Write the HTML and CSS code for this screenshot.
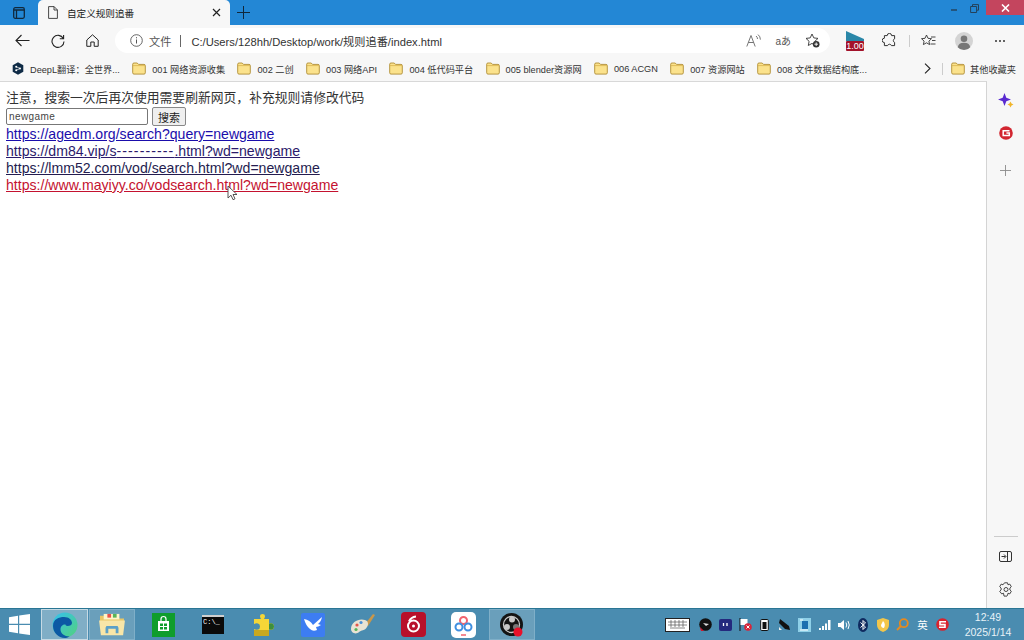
FILE: index.html
```html
<!DOCTYPE html>
<html lang="zh">
<head>
<meta charset="utf-8">
<title>自定义规则追番</title>
<link rel="stylesheet" href="styles.css">
</head>
<body>
<svg class="defs" width="0" height="0">
  <symbol id="folder" viewBox="0 0 14 13">
    <path d="M.7 2.2Q.7 1 2 1h3.2l1.3 1.4H12q1.3 0 1.3 1.2v7.2q0 1.3-1.3 1.300H2q-1.300 0-1.300-1.300z" fill="#fbe28c" stroke="#b08d33" stroke-width=".9"/>
    <path d="M1 3.6h12" stroke="#d9b24c" stroke-width=".8"/>
  </symbol>
</svg>
<div class="window">
  <header class="titlebar">
    <div class="tabicon">
      <svg width="12" height="12" viewBox="0 0 12 12"><rect x=".7" y=".7" width="10.6" height="10.6" rx="1.5" fill="none" stroke="#10283c" stroke-width="1.3"/><path d="M1 3h10M3.5 3v8" stroke="#10283c" stroke-width="1.3"/></svg>
    </div>
    <div class="tab">
      <svg class="pageicon" width="10" height="13" viewBox="0 0 10 13"><path d="M.6.6h5.5l3.3 3.3v8.5H.6zM6 .6v3.4h3.4" fill="none" stroke="#333" stroke-width=".9"/></svg>
      <span class="tabtitle">自定义规则追番</span>
      <svg class="tabclose" width="9" height="9" viewBox="0 0 9 9"><path d="M1 1l7 7M8 1L1 8" stroke="#222" stroke-width="1.2"/></svg>
    </div>
    <svg class="newtab" width="13" height="13" viewBox="0 0 13 13"><path d="M6.5 0v13M0 6.5h13" stroke="#10283c" stroke-width="1"/></svg>
    <div class="spacer"></div>
    <div class="winctl">
      <svg width="8" height="8" viewBox="0 0 8 8"><path d="M1 6h6" stroke="#24405a" stroke-width="1.4"/></svg>
    </div>
    <div class="winctl winctl-restore">
      <svg width="9" height="9" viewBox="0 0 9 9"><path d="M2.5 2V.6h6v5.6H7M.6 2.5h6v6h-6z" fill="none" stroke="#24405a" stroke-width="1"/></svg>
    </div>
    <div class="winclose">
      <svg width="9" height="8" viewBox="0 0 9 8"><path d="M1 .5l7 7M8 .5l-7 7" stroke="#fff" stroke-width="1.6"/></svg>
    </div>
  </header>

  <nav class="toolbar">
    <svg class="navback" width="15" height="13" viewBox="0 0 15 13"><path d="M14.5 6.5H1M6.5 1L1 6.5 6.5 12" fill="none" stroke="#222" stroke-width="1.1"/></svg>
    <svg class="navreload" width="14" height="14" viewBox="0 0 14 14"><path d="M12.3 4.5A6 6 0 1 0 13 7.5M12.6 1v3.8H8.8" fill="none" stroke="#222" stroke-width="1.1"/></svg>
    <svg class="navhome" width="13" height="13" viewBox="0 0 13 13"><path d="M.8 6L6.5.8 12.2 6v6.3H8.2V8H4.8v4.3H.8z" fill="none" stroke="#222" stroke-width="1"/></svg>
    <div class="address">
      <svg class="info" width="13" height="13" viewBox="0 0 13 13"><circle cx="6.5" cy="6.5" r="5.8" fill="none" stroke="#555" stroke-width=".9"/><path d="M6.5 5.5v4M6.5 3.2v1.1" stroke="#555" stroke-width="1"/></svg>
      <span class="fileword">文件</span>
      <span class="addrsep"></span>
      <span class="url">C:/Users/128hh/Desktop/work/规则追番/index.html</span>
      <span class="spacer"></span>
      <svg class="addricon1" width="15" height="13" viewBox="0 0 15 13"><path d="M.8 12.5L5 1.500l4.200 11M2.400 8.500h5.200M10 2q1.500 1 1.500 3M12 .6q2.400 1.800 2.400 5" fill="none" stroke="#666" stroke-width=".9"/></svg>
      <span class="translate">aあ</span>
      <svg class="addricon3" width="15" height="15" viewBox="0 0 15 15"><path d="M7 1l1.800 3.900 4.200.5-3.100 2.900.8 4.200L7 10.400l-3.700 2.100.8-4.200L1 5.400l4.200-.5z" fill="none" stroke="#333" stroke-width=".9"/><circle cx="11.200" cy="11.200" r="3.300" fill="#333"/><path d="M11.200 9.400v3.600M9.400 11.200H13" stroke="#fff" stroke-width=".9"/></svg>
    </div>
    <div class="speed">
      <svg class="speedflag" width="18" height="10" viewBox="0 0 18 10"><path d="M0 0l18 8v2H0z" fill="#2a87a8"/></svg>
      <span class="speedbadge">1.00</span>
    </div>
    <svg class="puzzle" width="15" height="15" viewBox="0 0 15 15"><path d="M5.200 2.600a2.200 2.200 0 0 1 4.400 0h3v3.200a1.900 1.900 0 0 0 0 3.600v3.200H9.400a2 2 0 0 0-3.800 0H2.400V9.600a2.200 2.200 0 0 1 0-4.400V2.600z" fill="none" stroke="#333" stroke-width="1"/></svg>
    <span class="toolsep"></span>
    <svg class="favs" width="15" height="14" viewBox="0 0 15 14"><path d="M5.500 1l1.500 3.300 3.500.4-2.600 2.400.7 3.500-3.100-1.800-3.100 1.800.7-3.500L.5 4.700 4 4.300zM10 3h4.500M11 6.500h3.500M9.500 10h5" fill="none" stroke="#333" stroke-width=".9"/></svg>
    <div class="avatar">
      <svg width="18" height="18" viewBox="0 0 18 18"><circle cx="9" cy="9" r="9" fill="#d4d4d4"/><circle cx="9" cy="6.700" r="3.300" fill="#777"/><path d="M2.800 15.200Q3.500 10.800 9 10.800t6.200 4.400Q13 18 9 18t-6.200-2.800z" fill="#777"/></svg>
    </div>
    <div class="more"><i></i><i></i><i></i></div>
  </nav>

  <div class="bookmarks">
    <div class="bm bm-deepl">
      <svg width="12" height="13" viewBox="0 0 12 13"><path d="M6 .3l5.300 3v6.400L6 12.700.7 9.700V3.300z" fill="#0f2b46"/><circle cx="4.200" cy="4.700" r="1" fill="#fff"/><circle cx="4.200" cy="8.300" r="1" fill="#fff"/><circle cx="8" cy="6.500" r="1" fill="#fff"/><path d="M4.200 4.700L8 6.500 4.200 8.300" fill="none" stroke="#fff" stroke-width=".7"/></svg>
      <span>DeepL翻译：全世界...</span>
    </div>
    <div class="bm"><svg class="fd"><use href="#folder"/></svg><span>001 网络资源收集</span></div>
    <div class="bm"><svg class="fd"><use href="#folder"/></svg><span>002 二创</span></div>
    <div class="bm"><svg class="fd"><use href="#folder"/></svg><span>003 网络API</span></div>
    <div class="bm"><svg class="fd"><use href="#folder"/></svg><span>004 低代码平台</span></div>
    <div class="bm"><svg class="fd"><use href="#folder"/></svg><span>005 blender资源网</span></div>
    <div class="bm"><svg class="fd"><use href="#folder"/></svg><span>006 ACGN</span></div>
    <div class="bm"><svg class="fd"><use href="#folder"/></svg><span>007 资源网站</span></div>
    <div class="bm"><svg class="fd"><use href="#folder"/></svg><span>008 文件数据结构底...</span></div>
    <div class="spacer"></div>
    <svg class="bmchev" width="7" height="11" viewBox="0 0 7 11"><path d="M1 .7l5 4.800-5 4.800" fill="none" stroke="#222" stroke-width="1.100"/></svg>
    <span class="bmsep"></span>
    <div class="bm bm-other"><svg class="fd"><use href="#folder"/></svg><span>其他收藏夹</span></div>
  </div>

  <div class="main">
    <main class="content">
      <div class="notice">注意，搜索一次后再次使用需要刷新网页，补充规则请修改代码</div>
      <form class="searchform">
        <input class="searchinput" type="text" value="newgame">
        <button class="searchbtn" type="button">搜索</button>
      </form>
      <div><a class="link-a" href="#a">https://agedm.org/search?query=newgame</a></div>
      <div><a class="link-b" href="#b">https://dm84.vip/s<span class="dashes">----------</span>.html?wd=newgame</a></div>
      <div><a class="link-c" href="#c">https://lmm52.com/vod/search.html?wd=newgame</a></div>
      <div><a class="link-d" href="#d">https://www.mayiyy.co/vodsearch.html?wd=newgame</a></div>
      <svg class="cursor" width="11" height="16" viewBox="0 0 11 16"><path d="M1 1v12l3-2.800 2 4.500 2-.9-2-4.300h4z" fill="#fff" stroke="#444" stroke-width=".9"/></svg>
    </main>
    <aside class="sidebar">
      <svg class="side-spark" width="16" height="15" viewBox="0 0 16 15"><path d="M6.500 0l1.800 4.700L13 6.500 8.300 8.300 6.500 13 4.700 8.300 0 6.500l4.700-1.800z" fill="#5a2bd0"/><path d="M12.500 8.500l1 2 2 1-2 1-1 2-1-2-2-1 2-1z" fill="#f0b429"/></svg>
      <svg class="side-g" width="14" height="14" viewBox="0 0 14 14"><circle cx="7" cy="7" r="6.800" fill="#d22630"/><path d="M10.500 4.800H4.200v4.600h6.100V7H7.400" fill="none" stroke="#fff" stroke-width="1.500"/></svg>
      <svg class="side-plus" width="11" height="11" viewBox="0 0 11 11"><path d="M5.500 0v11M0 5.500h11" stroke="#8a8a8a" stroke-width=".9"/></svg>
      <div class="spacer"></div>
      <span class="sidesep"></span>
      <svg class="side-panel" width="13" height="11" viewBox="0 0 13 11"><rect x=".5" y=".5" width="12" height="10" rx="1.500" fill="none" stroke="#333"/><path d="M8.500 .5v10M2.500 5.500h4M5 3.500l2 2-2 2" fill="none" stroke="#333"/></svg>
      <svg class="side-gear" width="14" height="15" viewBox="0 0 14 15"><path d="M5.500 .8h3l.5 2 1.800-.7 1.500 2.600-1.400 1.300v2l1.400 1.300-1.500 2.600-1.800-.7-.5 2.100-.5.800h-3l-.5-2.900-1.800.7L.7 9.300l1.400-1.300V6L.7 4.700l1.500-2.600 1.800.7z" fill="none" stroke="#333" stroke-width=".9"/><circle cx="7" cy="7.500" r="2" fill="none" stroke="#333" stroke-width=".9"/></svg>
    </aside>
  </div>

  <footer class="taskbar">
    <div class="startbtn">
      <svg width="21" height="21" viewBox="0 0 21 21"><path d="M0 3.200L9 1.800v8H0zM10.200 1.600L21 0v9.800H10.200zM0 11h9v8.200L0 17.800zM10.200 11H21v10l-10.800-1.600z" fill="#fff"/></svg>
    </div>
    <div class="tb tb-active">
      <svg width="26" height="26" viewBox="0 0 26 26"><defs><linearGradient id="edgeA" x1="0" y1="0" x2="1" y2="1"><stop offset="0" stop-color="#35c1f1"/><stop offset="1" stop-color="#52d17c"/></linearGradient></defs><circle cx="13" cy="13" r="12.500" fill="url(#edgeA)"/><path d="M1 14C1 7 7 5 12 5c5 0 8 3 8 6 0 2-2 3-4.500 3-2 0-2-1.500-2-1.500-3-.5-5 2-5 5 0 4 4 7 9 7-2 1-3.500 1.500-4.500 1.500C6 26 1 20 1 14z" fill="#0c59a4"/></svg>
    </div>
    <div class="tb tb-open">
      <svg width="26" height="24" viewBox="0 0 28 26"><path d="M1 3h9l2 3h15v6H1z" fill="#e9c766"/><rect x="5" y="1" width="17" height="6" fill="#fff5c8"/><rect x="9" y="1" width="4" height="4" fill="#e8524a"/><rect x="15" y="1" width="4" height="4" fill="#58b45a"/><path d="M0 8h28l-2 16H2z" fill="#f8e6a8"/><path d="M8 14h12l1 2v6h-3v-5h-8v5H7v-6z" fill="#5ba0c8"/></svg>
    </div>
    <div class="tb">
      <svg width="23" height="24" viewBox="0 0 23 24"><rect width="23" height="24" fill="#0f9d2c"/><path d="M9 8V6a2.500 2.500 0 0 1 5 0v2" fill="none" stroke="#fff" stroke-width="1.200"/><path d="M6 8h11v10H6z" fill="#fff"/><path d="M8 10.500h3v2.500H8zM12 10.500h3v2.500h-3zM8 14h3v2.500H8zM12 14h3v2.500h-3z" fill="#0f9d2c"/></svg>
    </div>
    <div class="tb">
      <div class="cmd"><span class="cmdtext">C:\_</span></div>
    </div>
    <div class="tb">
      <svg width="21" height="22" viewBox="0 0 21 22"><path d="M7 2q0-2 2.500-2T12 2q0 1.500-1 3h5v5q1.500-1 3-.5 2 .5 2 3t-2 3q-1.500.5-3-.5v6H1v-6q2 1 4 .5t2-3-2-3q-2-.5-4 .5V5h7q-1-1.500-1-3z" fill="#f5d637"/><path d="M16 10q1.500-1 3-.5 2 .5 2 3t-2 3q-1.500.5-3-.5z" fill="#3d8f3d"/><path d="M1 16h15v6H1z" fill="#c9a820"/></svg>
    </div>
    <div class="tb">
      <svg width="24" height="24" viewBox="0 0 24 24"><rect width="24" height="24" rx="2" fill="#3d7df2"/><path d="M3 6q6 1 9 6l9-8q-1 5-4 7l3 1q-3 2-5 2l1 3q-4 2-7-1Q5 13 3 6z" fill="#fff"/></svg>
    </div>
    <div class="tb">
      <svg width="26" height="24" viewBox="0 0 26 24"><path d="M23 1l2 1-7 11-3-2z" fill="#c9974a"/><path d="M1 16C1 9 9 5 15 7c3 1 4 4 2 7-2 4-6 3-8 5-3 3-8 1-8-3z" fill="#e9e3d3"/><circle cx="7" cy="12" r="1.600" fill="#e2574c"/><circle cx="11" cy="9.500" r="1.600" fill="#4a90d9"/><circle cx="6" cy="16.500" r="1.600" fill="#58b45a"/></svg>
    </div>
    <div class="tb">
      <svg width="25" height="25" viewBox="0 0 25 25"><rect width="25" height="25" rx="4" fill="#b8102a"/><circle cx="12.500" cy="14" r="5.500" fill="none" stroke="#fff" stroke-width="2"/><circle cx="12.500" cy="14" r="1.500" fill="#fff"/><path d="M15 4.500q-5 .5-7 5" fill="none" stroke="#fff" stroke-width="2"/></svg>
    </div>
    <div class="tb">
      <svg width="25" height="26" viewBox="0 0 25 26"><rect width="25" height="26" rx="5" fill="#fff"/><circle cx="12.500" cy="8.500" r="3.500" fill="none" stroke="#f0636e" stroke-width="2"/><circle cx="8" cy="15" r="3.500" fill="none" stroke="#3f8fe0" stroke-width="2"/><circle cx="17" cy="15" r="3.500" fill="none" stroke="#3f8fe0" stroke-width="2"/><path d="M10 23h5" stroke="#f0636e" stroke-width="1.500"/></svg>
    </div>
    <div class="tb tb-obs">
      <svg width="24" height="24" viewBox="0 0 24 24"><circle cx="11.500" cy="11.500" r="11.500" fill="#141414"/><circle cx="11.500" cy="11.500" r="8" fill="none" stroke="#c8c8c8" stroke-width="1.300"/><circle cx="12" cy="6.500" r="3" fill="#c8c8c8"/><circle cx="7" cy="14" r="3" fill="#c8c8c8"/><circle cx="16" cy="14" r="3" fill="#777"/><circle cx="18" cy="19" r="4.500" fill="#e8102a"/></svg>
    </div>
    <div class="spacer"></div>
    <div class="tray">
      <svg class="tray-kb" width="25" height="14" viewBox="0 0 25 14"><rect x=".5" y=".5" width="24" height="13" fill="#fff" stroke="#222"/><path d="M3 4h19M3 7h19M5 10h15M6 2v7M10 2v7M14 2v7M18 2v7" stroke="#555" stroke-width=".7"/></svg>
      <div class="ti"><svg width="13" height="13" viewBox="0 0 13 13"><circle cx="6.500" cy="6.500" r="6.300" fill="#111"/><path d="M1 9l4 4H2z" fill="#d3142a"/><path d="M4 5l6 1-3 2z" fill="#ddd"/></svg></div>
      <div class="ti"><svg width="13" height="12" viewBox="0 0 13 12"><rect width="13" height="12" rx="2" fill="#24297e"/><path d="M4.500 4v3M8 4v3" stroke="#fff" stroke-width="1.300"/></svg></div>
      <div class="ti"><svg width="13" height="13" viewBox="0 0 13 13"><path d="M1 0v13" stroke="#111"/><path d="M1.500 1h7v6h-7z" fill="#fff"/><circle cx="9" cy="9" r="3.800" fill="#d8243a"/><path d="M7.500 7.500l3 3M10.500 7.500l-3 3" stroke="#fff"/></svg></div>
      <div class="ti"><svg width="9" height="13" viewBox="0 0 9 13"><rect x=".7" y="1.500" width="7.600" height="11" rx="1" fill="#fff" stroke="#111"/><rect x="2.500" y="4" width="4" height="7" fill="#111"/></svg></div>
      <div class="ti"><svg width="13" height="13" viewBox="0 0 13 13"><path d="M2 1l9 7 1 4-5-1-6-6z" fill="#111"/><path d="M1 9l3 3H1z" fill="#eee"/></svg></div>
      <div class="ti"><svg width="13" height="14" viewBox="0 0 13 14"><rect width="13" height="14" fill="#8fd0e8"/><rect x="4" y="3" width="6" height="8" fill="#1b6fb0"/><path d="M2 2h3M2 12h8" stroke="#fff"/></svg></div>
      <div class="ti"><svg width="13" height="11" viewBox="0 0 13 11"><path d="M1 9h2v2H1zM4 7h2v4H4zM7 4.500h2V11H7zM10 1h2.500v10H10z" fill="#fff"/></svg></div>
      <div class="ti"><svg width="13" height="12" viewBox="0 0 13 12"><path d="M1 4h2.500L7 1v10L3.500 8H1z" fill="#fff"/><path d="M9 3.500q1.500 2.500 0 5M11 2q2.500 4 0 8" fill="none" stroke="#fff"/></svg></div>
      <div class="ti"><svg width="10" height="14" viewBox="0 0 10 14"><ellipse cx="5" cy="7" rx="5" ry="7" fill="#0f2a5f"/><path d="M2.500 4.500L7.500 9 5 11.500v-9L7.500 5 2.500 9.500" fill="none" stroke="#fff"/></svg></div>
      <div class="ti"><svg width="12" height="14" viewBox="0 0 12 14"><path d="M6 0l6 2v5q0 5-6 7-6-2-6-7V2z" fill="#f3c64a"/><path d="M6 3q3 3 1 7-3 0-3-3z" fill="#fff"/></svg></div>
      <div class="ti"><svg width="13" height="13" viewBox="0 0 13 13"><circle cx="7.800" cy="5.200" r="4" fill="none" stroke="#e68a1f" stroke-width="1.800"/><path d="M5 8l-4 4" stroke="#e68a1f" stroke-width="2"/></svg></div>
      <div class="ti ime">英</div>
      <div class="ti"><svg width="13" height="13" viewBox="0 0 13 13"><circle cx="6.500" cy="6.500" r="6.300" fill="#d9232e"/><path d="M10 3.800H4v2.800h5v2.600H3" fill="none" stroke="#fff" stroke-width="1.600"/></svg></div>
    </div>
    <div class="clock"><div>12:49</div><div>2025/1/14</div></div>
  </footer>
</div>
</body>
</html>
```
FILE: styles.css
```css
* { box-sizing: border-box; }
html, body { margin: 0; height: 100%; overflow: hidden; }
body { font-family: "Liberation Sans", "Noto Sans CJK SC", sans-serif; background: #fff; }
.defs { position: absolute; }
svg { display: block; flex: none; }
.window { display: flex; flex-direction: column; height: 640px; width: 1024px; }
.spacer { flex: 1; }

.titlebar { height: 25px; background: #2387d5; display: flex; align-items: center; flex: none; }
.tabicon { width: 38px; display: flex; justify-content: center; }
.tab { width: 192px; height: 25px; align-self: flex-end; background: #f7f7f7; border-radius: 5px 5px 0 0; display: flex; align-items: center; padding: 0 9px 0 10px; }
.pageicon { margin-right: 9px; }
.tabtitle { font-size: 9.6px; color: #222; flex: 1; }
.newtab { margin-left: 7px; }
.winctl { width: 20px; display: flex; justify-content: center; align-self: flex-start; padding-top: 4px; }
.winctl-restore { margin-right: 2px; }
.winclose { width: 38px; height: 15px; background: #c4455e; display: flex; align-items: center; justify-content: center; align-self: flex-start; }

.toolbar { height: 31px; background: #f7f7f7; display: flex; align-items: center; flex: none; }
.navback { margin-left: 15px; }
.navreload { margin-left: 21px; }
.navhome { margin-left: 21px; }
.address { width: 715px; height: 25px; margin-left: 16px; background: #fff; border-radius: 13px; display: flex; align-items: center; padding: 0 10px 0 15px; }
.fileword { font-size: 11.2px; color: #555; margin-left: 6px; }
.addrsep { width: 1px; height: 12px; background: #666; margin: 0 10px 0 9px; }
.url { font-size: 11.2px; color: #333; }
.translate { font-size: 10px; color: #555; margin-left: 14px; }
.addricon3 { margin-left: 14px; }
.speed { width: 20px; height: 22px; margin-left: 15px; display: flex; flex-direction: column; align-items: center; }
.speedflag { margin-top: 1px; }
.speedbadge { background: #a3122a; color: #fff; font-size: 9px; line-height: 10px; height: 10px; width: 18px; text-align: center; border-radius: 1px; }
.puzzle { margin-left: 17px; }
.toolsep { width: 1px; height: 12px; background: #ccc; margin-left: 12px; }
.favs { margin-left: 11px; }
.avatar { margin-left: 19px; }
.more { margin-left: 22px; display: flex; gap: 2px; }
.more i { width: 2px; height: 2px; border-radius: 50%; background: #333; }

.bookmarks { height: 25px; background: #f7f7f7; display: flex; align-items: center; gap: 12.3px; padding-left: 12px; padding-right: 8px; flex: none; }
.bm { display: flex; align-items: center; gap: 6px; font-size: 9.2px; color: #333; white-space: nowrap; }
.fd { width: 14px; height: 13px; }
.bmsep { width: 1px; height: 12px; background: #ccc; margin: 0 -4px 0 -2px; }
.bm-other { gap: 5px; }

.main { flex: 1; display: flex; min-height: 0; }
.content { width: 987px; position: relative; padding: 7px 6px 0; font-size: 14.1px; line-height: 17px; color: #222; border-top: 1px solid #d8d8d8; border-right: 1px solid #d4d4d4; }
.notice { font-size: 12.8px; color: #333; margin-bottom: 2px; }
.searchform { display: flex; align-items: center; gap: 4px; height: 17px; margin-bottom: 1px; }
.searchinput { width: 142px; height: 17px; padding: 0 2px; border: 1px solid #777; border-radius: 2px; font: 10px "Liberation Sans", sans-serif; letter-spacing: .4px; color: #444; }
.searchbtn { width: 34px; height: 19px; padding: 0; border: 1px solid #888; border-radius: 2px; background: #efefef; font: 11px "Noto Sans CJK SC", sans-serif; color: #222; }
.link-a { color: #1a0dab; }
.link-b { color: #2b1a6b; }
.link-c { color: #241c4f; }
.link-d { color: #c4122f; }
.dashes { letter-spacing: 1.1px; }
.cursor { position: absolute; left: 227px; top: 103px; }

.sidebar { flex: 1; background: #f7f7f7; display: flex; flex-direction: column; align-items: center; padding: 12px 0 11px; }
.side-g { margin-top: 18px; }
.side-plus { margin-top: 25px; }
.sidesep { width: 24px; height: 1px; background: #ccc; margin-bottom: 14px; }
.side-gear { margin-top: 20px; }

.taskbar { height: 32px; background: #4a8cb0; border-top: 1px solid #2a7694; display: flex; align-items: center; flex: none; color: #fff; }
.startbtn { width: 39px; display: flex; justify-content: center; }
.tb { width: 50px; height: 31px; display: flex; align-items: center; justify-content: center; }
.tb-active { width: 47px; margin: 0 1px 0 2px; background: #80aec6; border: 1px solid #c6dae4; }
.tb-open { width: 46px; margin-right: 3px; background: #6a9fbb; border: 1px solid #7fafc8; }
.tb-obs { width: 46px; margin-left: 1px; background: #6a9fbb; border: 1px solid #7fafc8; }
.cmd { width: 22px; height: 19px; background: #0a0a0a; border-top: 2px solid #cfcfcf; overflow: hidden; }
.cmdtext { display: block; font: 7px/10px "Liberation Mono", monospace; color: #fff; padding-left: 1px; }
.tray { display: flex; align-items: center; flex: none; }
.tray-kb { margin-right: 6px; }
.ti { width: 19.7px; display: flex; justify-content: center; align-items: center; }
.ime { font-size: 10.5px; color: #fff; }
.clock { width: 72px; font-size: 10.5px; line-height: 15px; text-align: center; color: #e8f2f7; }
```
